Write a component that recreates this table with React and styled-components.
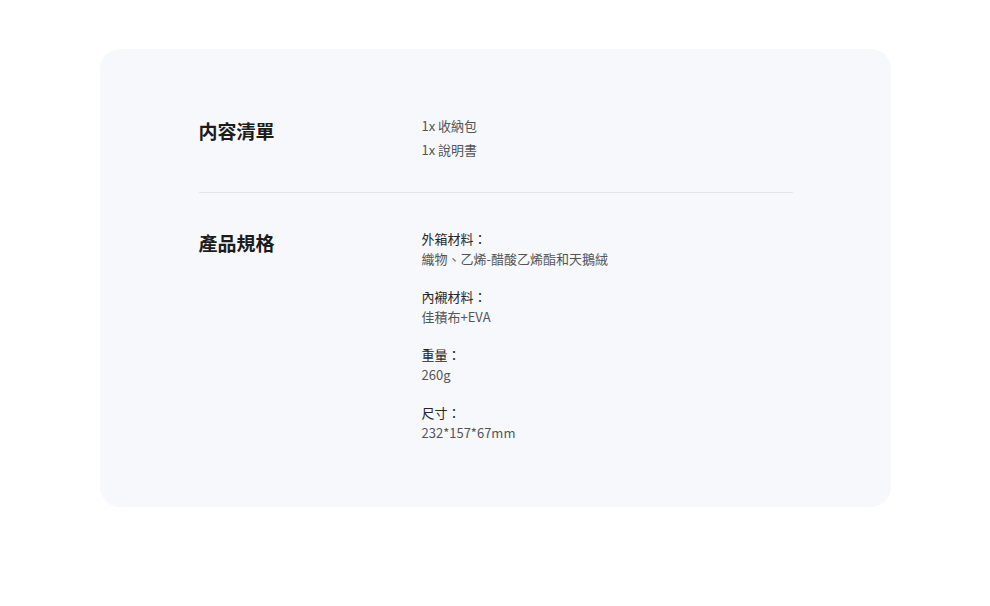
import React from "react";
import styled, { createGlobalStyle } from "styled-components";

const Global = createGlobalStyle`
  html, body { margin: 0; padding: 0; background: #ffffff; }
  body { font-family: "Noto Sans CJK TC", "Noto Sans", sans-serif; }
`;

const Page = styled.div`
  width: 990px;
  height: 606px;
  padding-top: 49px;
  box-sizing: border-box;
`;

const Card = styled.section`
  width: 791px;
  margin: 0 auto;
  box-sizing: border-box;
  background: #f7f8fc;
  border-radius: 20px;
  padding: 65px 98px 65px 99px;
  display: flex;
  flex-direction: column;
`;

const Row = styled.div`
  display: grid;
  grid-template-columns: 223px 1fr;
  align-items: start;
`;

const Heading = styled.h2`
  margin: ${(p) => p.$offset || 0}px 0 0;
  font-size: 19px;
  line-height: 28px;
  font-weight: 700;
  color: #1c1c1c;
`;

const Divider = styled.hr`
  border: none;
  height: 1px;
  background: #e3e5eb;
  margin: 30px 0 36px;
`;

const List = styled.ul`
  list-style: none;
  margin: 0;
  padding: 0;
  font-size: 13px;
  line-height: 24px;
  color: #555;
`;

const Specs = styled.div`
  display: flex;
  flex-direction: column;
  gap: 19px;
  font-size: 13px;
  line-height: 19.5px;
`;

const SpecLabel = styled.div`
  color: #262626;
`;

const SpecValue = styled.div`
  color: #555;
`;

const specs = [
  ["外箱材料：", "織物、乙烯-醋酸乙烯酯和天鵝絨"],
  ["內襯材料：", "佳積布+EVA"],
  ["重量：", "260g"],
  ["尺寸：", "232*157*67mm"],
];

export default function App() {
  return (
    <>
      <Global />
      <Page>
        <Card>
          <Row>
            <Heading $offset={3}>内容清單</Heading>
            <List>
              <li>1x 收納包</li>
              <li>1x 說明書</li>
            </List>
          </Row>
          <Divider />
          <Row>
            <Heading>產品規格</Heading>
            <Specs>
              {specs.map(([l, v]) => (
                <div key={l}>
                  <SpecLabel>{l}</SpecLabel>
                  <SpecValue>{v}</SpecValue>
                </div>
              ))}
            </Specs>
          </Row>
        </Card>
      </Page>
    </>
  );
}
